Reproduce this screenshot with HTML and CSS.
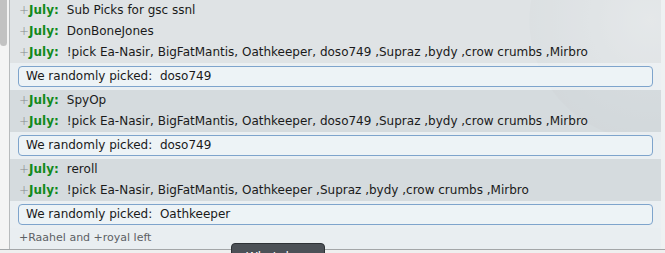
FILE: index.html
```html
<!DOCTYPE html>
<html lang="en">
<head>
    <meta charset="UTF-8">
    <title>Chat log</title>
    <link rel="stylesheet" href="styles.css">
</head>
<body>
    <div class="frame">
        <div class="gutter">
            <div class="thumb"></div>
        </div>

        <div class="chat">
            <div class="log">
                <div class="group first">
                    <div class="msg"><span class="rank">+</span><span class="user">July:</span><span class="text">Sub Picks for gsc ssnl</span></div>
                    <div class="msg"><span class="rank">+</span><span class="user">July:</span><span class="text">DonBoneJones</span></div>
                    <div class="msg"><span class="rank">+</span><span class="user">July:</span><span class="text">!pick Ea-Nasir, BigFatMantis, Oathkeeper, doso749 ,Supraz ,bydy ,crow crumbs ,Mirbro</span></div>
                </div>
                <div class="band">
                    <div class="box">We randomly picked:&nbsp; doso749</div>
                </div>

                <div class="group">
                    <div class="msg"><span class="rank">+</span><span class="user">July:</span><span class="text">SpyOp</span></div>
                    <div class="msg"><span class="rank">+</span><span class="user">July:</span><span class="text">!pick Ea-Nasir, BigFatMantis, Oathkeeper, doso749 ,Supraz ,bydy ,crow crumbs ,Mirbro</span></div>
                </div>
                <div class="band">
                    <div class="box">We randomly picked:&nbsp; doso749</div>
                </div>

                <div class="group">
                    <div class="msg"><span class="rank">+</span><span class="user">July:</span><span class="text">reroll</span></div>
                    <div class="msg"><span class="rank">+</span><span class="user">July:</span><span class="text">!pick Ea-Nasir, BigFatMantis, Oathkeeper ,Supraz ,bydy ,crow crumbs ,Mirbro</span></div>
                </div>
                <div class="band">
                    <div class="box">We randomly picked:&nbsp; Oathkeeper</div>
                </div>

                <div class="notice">+Raahel and +royal left</div>
            </div>
            <div class="edge"></div>
        </div>
    </div>

    <!-- popup that sits over the bottom edge -->
    <div class="popup">What do</div>
</body>
</html>
```

FILE: styles.css
```css
* {
    margin: 0;
    padding: 0;
    box-sizing: border-box;
}

body {
    width: 665px;
    height: 253px;
    overflow: hidden;
    background: #efefef;
    font-family: 'DejaVu Sans', Verdana, sans-serif;
    font-size: 12px;
    color: #1a1a1a;
    position: relative;
}

.frame {
    display: flex;
    height: 250px;
    border-bottom: 1px solid #a3a6a8;
}

.gutter {
    width: 10px;
    background: #f4f4f4;
    border-right: 1px solid #b8bbbd;
}

.thumb {
    width: 7px;
    height: 46px;
    background: #c2c2c2;
    border-radius: 0 0 4px 4px;
}

.chat {
    flex: 1;
    display: flex;
    background: #e4e8ea radial-gradient(circle at 640px 20px, #eef0f1 0, #e6e9eb 60px, #dfe3e5 120px, transparent 121px);
}

.log {
    flex: 1;
}

.edge {
    width: 4px;
    background: #eef1f2;
}

.group {
    background: rgba(200, 207, 212, 0.55);
}

.group.first {
    background: rgba(214, 219, 222, 0.4);
}

.msg {
    height: 21px;
    line-height: 21px;
    padding-left: 9px;
    white-space: nowrap;
}

.rank {
    color: #85898c;
    font-weight: 300;
}

.user {
    color: #12891b;
    font-weight: bold;
    margin-right: 8px;
}

.band {
    padding: 3px 8px 3px 8px;
    background: rgba(238, 244, 247, 0.6);
}

.box {
    height: 21px;
    line-height: 19px;
    padding-left: 7px;
    border: 1px solid #7ea4cc;
    border-radius: 4px;
    background: #edf3f6;
}

.notice {
    height: 21px;
    line-height: 19px;
    padding-left: 9px;
    color: #5c6064;
    font-size: 11px;
    background: rgba(238, 244, 247, 0.5);
}

.popup {
    position: absolute;
    left: 231px;
    top: 243px;
    width: 94px;
    height: 30px;
    padding-top: 6px;
    padding-left: 14px;
    background: #4c5157;
    border: 1px solid #2e3236;
    border-radius: 4px;
    color: #fff;
    font-size: 12px;
}
```
